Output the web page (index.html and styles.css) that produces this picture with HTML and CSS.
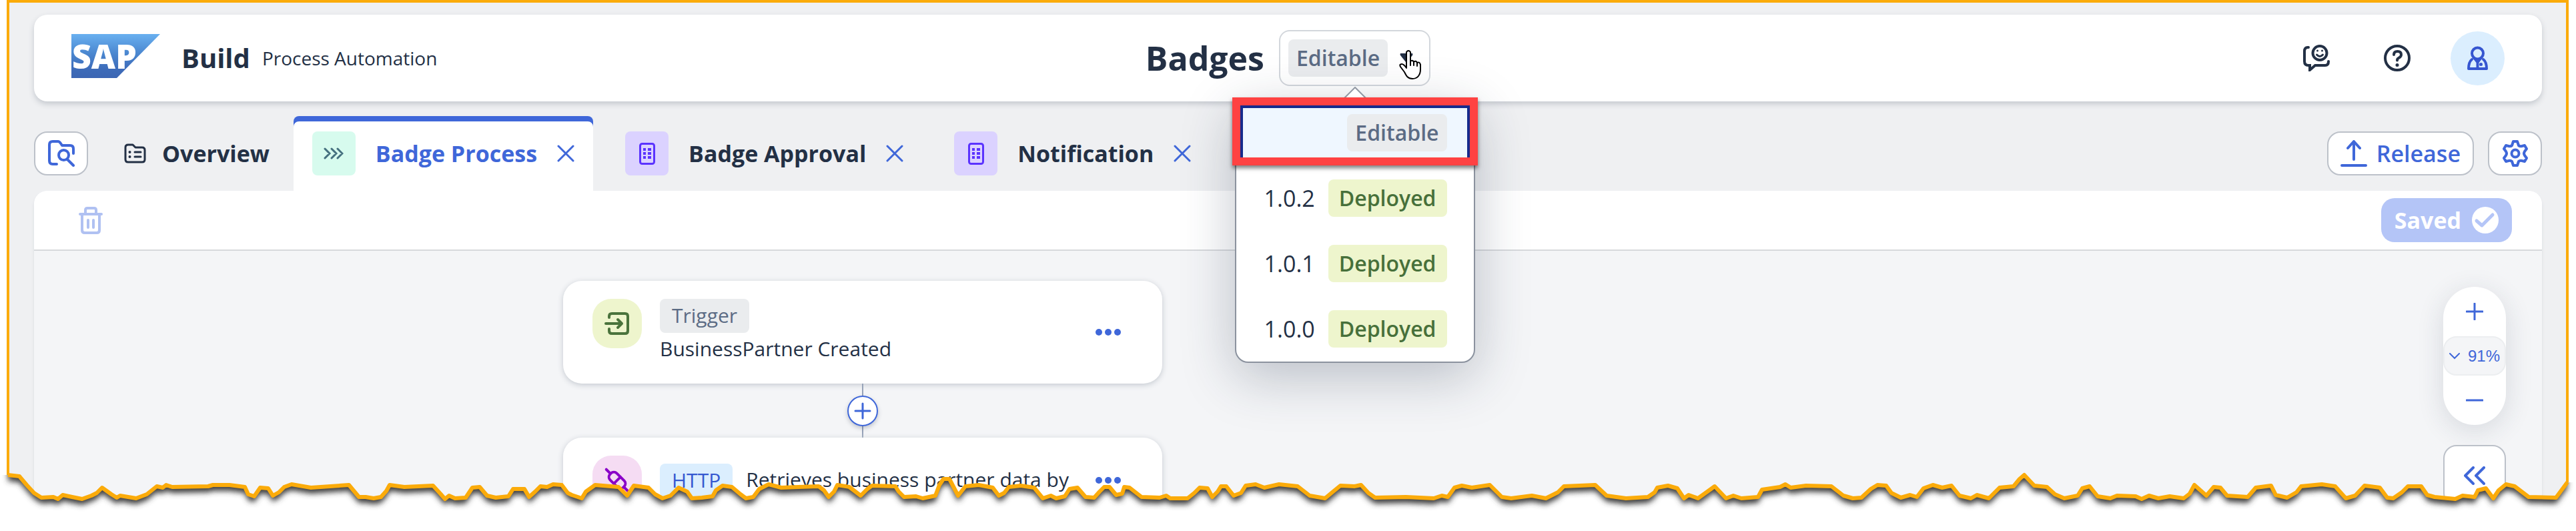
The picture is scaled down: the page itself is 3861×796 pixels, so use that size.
FILE: index.html
```html
<!DOCTYPE html>
<html lang="en">
<head>
<meta charset="utf-8">
<title>Badges - Build Process Automation</title>
<link rel="stylesheet" href="styles.css">
</head>
<body>
<div class="page">
  <div class="frame">
    <header class="shell">
      <div class="brand">
        <svg class="logo" viewBox="0 0 133 66" role="img" aria-label="SAP">
          <defs><linearGradient id="logo-fill" x1="0" y1="0" x2="0" y2="1"><stop offset="0" stop-color="#69b0f0"/><stop offset=".45" stop-color="#4a86cf"/><stop offset=".8" stop-color="#3d6bb9"/><stop offset="1" stop-color="#3c66b3"/></linearGradient></defs>
          <path d="M0 0H133L68 66H0Z" fill="url(#logo-fill)"/>
          <text class="logo-text" x="1" y="52">SAP</text>
        </svg>
        <span class="brand-name">Build</span>
        <span class="brand-sub">Process Automation</span>
      </div>
      <div class="title">
        <h1 class="title-text">Badges</h1>
        <div class="version">
          <button class="version-button" type="button" aria-haspopup="true" aria-expanded="true">
            <span class="tag tag-neutral tag-roomy">Editable</span>
            <svg class="caret" viewBox="0 0 20 14" aria-hidden="true"><path d="M1 0H19Q20 1 19 3L11 13Q10 14 9 13L1 3Q0 1 1 0Z" fill="#233045"/></svg>
          </button>
          <svg class="hand" viewBox="0 0 34 44" aria-hidden="true"><path d="M11 3Q14 -1 17 3V17Q20 14 22 18Q25 15 27 19Q31 17 32 22V29C32 37 28 43 20 43C13 43 11 39 8 33L2 25Q0 21 4 21Q7 21 11 27Z" fill="#fff" stroke="#000" stroke-width="2" stroke-linejoin="round"/><path d="M17 16V23M22 17V23M27 19V24" stroke="#000" stroke-width="2" stroke-linecap="round"/></svg>
          <div class="popover">
            <svg class="popover-arrow" viewBox="0 0 36 18" aria-hidden="true"><path d="M0 19L18 1L36 19" fill="#fff" stroke="#9299a4" stroke-width="2"/></svg>
            <ul class="versions">
              <li><button class="option option-focus" type="button"><span class="tag tag-neutral tag-roomy">Editable</span></button></li>
              <li><button class="option" type="button">1.0.2 <span class="tag tag-green tag-roomy">Deployed</span></button></li>
              <li><button class="option" type="button">1.0.1 <span class="tag tag-green tag-roomy">Deployed</span></button></li>
              <li><button class="option" type="button">1.0.0 <span class="tag tag-green tag-roomy">Deployed</span></button></li>
            </ul>
          </div>
        </div>
      </div>
      <div class="actions">
        <button class="round" type="button" aria-label="Feedback">
          <svg class="icon" viewBox="0 0 40 40"><g fill="none" stroke="#233045" stroke-width="4" stroke-linecap="round"><path d="M8 4H7Q2 4 2 10V25Q2 31 8 31H10V38L18 31H33Q38 31 38 25"/><circle cx="25" cy="12.500" r="10.500"/><path d="M20.500 15Q25 20 29.500 15" stroke-width="3"/></g><circle cx="21.500" cy="9" r="1.500" fill="#233045"/><circle cx="28.500" cy="9" r="1.500" fill="#233045"/></svg>
        </button>
        <button class="round" type="button" aria-label="Help">
          <svg class="icon" viewBox="0 0 40 40"><circle cx="20" cy="20" r="18" fill="none" stroke="#233045" stroke-width="4"/><path d="M15 15Q15 10 20.500 10Q26 10 26 15Q26 18 22 20Q20 21 20 23.500" fill="none" stroke="#233045" stroke-width="4" stroke-linecap="round"/><circle cx="20" cy="30.500" r="2.500" fill="#233045"/></svg>
        </button>
        <button class="round avatar" type="button" aria-label="Profile">
          <svg class="icon-avatar" viewBox="0 0 31 36"><circle cx="15.500" cy="11" r="8.500" fill="none" stroke="#3656d0" stroke-width="4"/><path d="M7 20Q2 24 2 34H29Q29 24 24 20" fill="none" stroke="#3656d0" stroke-width="4" stroke-linejoin="round" stroke-linecap="round"/><path d="M8 18Q15.500 22 23 18L17.500 25V34H13.500V25Z" fill="#3656d0"/><circle cx="20.500" cy="27.500" r="2.500" fill="#3656d0"/></svg>
        </button>
      </div>
    </header>

    <nav class="tabbar" aria-label="Artifacts">
      <button class="square" type="button" aria-label="Browse project">
        <svg class="icon" viewBox="0 0 40 40"><g fill="none" stroke="#3f67d9" stroke-width="4" stroke-linecap="round" stroke-linejoin="round"><path d="M13 36H7Q2 36 2 31V7Q2 2 7 2H15Q17 2 19 5L21 8H33Q38 8 38 13V20"/><circle cx="23.500" cy="22.500" r="7.500"/><path d="M29 29L38 38"/></g></svg>
      </button>
      <div class="tabs">
        <div class="tab tab-first">
          <svg class="icon-tab" viewBox="0 0 33 30"><path d="M2 6Q2 2 6 2H13L17 6H27Q31 6 31 10V24Q31 28 27 28H6Q2 28 2 24Z" fill="none" stroke="#233045" stroke-width="3" stroke-linejoin="round"/><path d="M16 13H25M16 20H25" stroke="#233045" stroke-width="3" stroke-linecap="round"/><circle cx="8.500" cy="13" r="2" fill="#233045"/><circle cx="8.500" cy="20" r="2" fill="#233045"/></svg>
          <button class="tab-label" type="button">Overview</button>
        </div>
        <div class="tab tab-active">
          <span class="chip chip-mint"><svg class="icon-chevrons" viewBox="0 0 30 18"><path d="M2 2L9 9L2 16M12 2L19 9L12 16M21 2L28 9L21 16" fill="none" stroke="#45707f" stroke-width="3" stroke-linecap="round"/></svg></span>
          <button class="tab-label" type="button" aria-current="page">Badge Process</button>
          <button class="close" type="button" aria-label="Close Badge Process"><svg class="icon-close" viewBox="0 0 26 26"><path d="M2 2L24 24M24 2L2 24" stroke="#3f67d9" stroke-width="3" stroke-linecap="round"/></svg></button>
        </div>
        <div class="tab">
          <span class="chip chip-violet"><svg class="icon-form" viewBox="0 0 24 33"><rect x="1.500" y="1.500" width="21" height="30" rx="3" fill="none" stroke="#5b33ff" stroke-width="3"/><path d="M6 10H10M13 10H18M6 16H10M13 16H18M6 22H10M13 22H18" stroke="#5b33ff" stroke-width="4"/></svg></span>
          <button class="tab-label" type="button">Badge Approval</button>
          <button class="close" type="button" aria-label="Close Badge Approval"><svg class="icon-close" viewBox="0 0 26 26"><path d="M2 2L24 24M24 2L2 24" stroke="#3f67d9" stroke-width="3" stroke-linecap="round"/></svg></button>
        </div>
        <div class="tab">
          <span class="chip chip-violet"><svg class="icon-form" viewBox="0 0 24 33"><rect x="1.500" y="1.500" width="21" height="30" rx="3" fill="none" stroke="#5b33ff" stroke-width="3"/><path d="M6 10H10M13 10H18M6 16H10M13 16H18M6 22H10M13 22H18" stroke="#5b33ff" stroke-width="4"/></svg></span>
          <button class="tab-label" type="button">Notification</button>
          <button class="close" type="button" aria-label="Close Notification"><svg class="icon-close" viewBox="0 0 26 26"><path d="M2 2L24 24M24 2L2 24" stroke="#3f67d9" stroke-width="3" stroke-linecap="round"/></svg></button>
        </div>
      </div>
      <div class="tab-actions">
        <button class="release" type="button">
          <svg class="icon" viewBox="0 0 40 40"><path d="M20 29V2M11 12L20 2L29 12M2 38H38" fill="none" stroke="#3f67d9" stroke-width="4" stroke-linecap="round" stroke-linejoin="round"/></svg>
          Release
        </button>
        <button class="square" type="button" aria-label="Settings">
          <svg class="icon" viewBox="0 0 40 40"><g fill="none" stroke="#3f67d9" stroke-width="4" stroke-linejoin="round"><path d="M17 2H23L25 8Q27 10 30 9L34 8L37 13L34 17Q32 20 34 23L37 27L34 32L30 31Q27 30 25 32L23 38H17L15 32Q13 30 10 31L6 32L3 27L6 23Q8 20 6 17L3 13L6 8L10 9Q13 10 15 8Z"/><circle cx="20" cy="20" r="5.500"/></g></svg>
        </button>
      </div>
    </nav>

    <main class="panel">
      <div class="toolbar">
        <button class="plain" type="button" aria-label="Delete" disabled>
          <svg class="icon-trash" viewBox="0 0 36 41"><g fill="none" stroke="#b0c1f2" stroke-width="4" stroke-linecap="round" stroke-linejoin="round"><path d="M2 11H34M10 10V5Q10 2 13 2H23Q26 2 26 5V10M5 12V35Q5 39 9 39H27Q31 39 31 35V12"/><path d="M14 20V31M22 20V31"/></g></svg>
        </button>
        <button class="saved" type="button" disabled>
          Saved
          <svg class="icon" viewBox="0 0 40 40"><circle cx="20" cy="20" r="20" fill="#fff"/><path d="M7 21L15 28L31 12" fill="none" stroke="#b4c5f7" stroke-width="5" stroke-linecap="round" stroke-linejoin="round"/></svg>
        </button>
      </div>
      <div class="canvas">
        <div class="flow">
          <article class="card">
            <span class="badge badge-green"><svg class="icon-step" viewBox="0 0 38 38"><g fill="none" stroke="#4a733c" stroke-width="4" stroke-linecap="round" stroke-linejoin="round"><path d="M7 10V8Q7 4 11 4H31Q35 4 35 8V30Q35 34 31 34H11Q7 34 7 30V27M2 19H26M20 13L26 19L20 25"/></g></svg></span>
            <div class="card-body">
              <span class="tag tag-neutral">Trigger</span>
              <span class="card-text">BusinessPartner Created</span>
            </div>
            <button class="plain" type="button" aria-label="More options"><svg class="dots" viewBox="0 0 38 10"><circle cx="5" cy="5" r="5" fill="#3f67d9"/><circle cx="19" cy="5" r="5" fill="#3f67d9"/><circle cx="33" cy="5" r="5" fill="#3f67d9"/></svg></button>
          </article>
          <div class="connector">
            <button class="add" type="button" aria-label="Add step"><svg class="icon-close" viewBox="0 0 26 26"><path d="M13 2V24M2 13H24" stroke="#3f67d9" stroke-width="3" stroke-linecap="round"/></svg></button>
          </div>
          <article class="card">
            <span class="badge badge-pink"><svg class="icon-step" viewBox="0 0 38 38"><g fill="none" stroke="#8a00c8" stroke-width="4" stroke-linecap="round" transform="rotate(45 19 19)"><path d="M-4 19H4M34 19H42"/><rect x="5" y="12" width="28" height="14" rx="6"/><path d="M19 12V26"/></g></svg></span>
            <div class="card-body card-row">
              <span class="tag tag-blue">HTTP</span>
              <span class="card-text">Retrieves business partner data by</span>
            </div>
            <button class="plain" type="button" aria-label="More options"><svg class="dots" viewBox="0 0 38 10"><circle cx="5" cy="5" r="5" fill="#3f67d9"/><circle cx="19" cy="5" r="5" fill="#3f67d9"/><circle cx="33" cy="5" r="5" fill="#3f67d9"/></svg></button>
          </article>
        </div>
        <div class="tools">
          <div class="zoom">
            <button class="zoom-step" type="button" aria-label="Zoom in"><svg class="icon-close" viewBox="0 0 26 26"><path d="M13 1V25M1 13H25" stroke="#3f67d9" stroke-width="3" stroke-linecap="round"/></svg></button>
            <button class="zoom-level" type="button"><svg class="icon-down" viewBox="0 0 16 10"><path d="M1 1L8 8L15 1" fill="none" stroke="#3f67d9" stroke-width="2" stroke-linecap="round"/></svg>91%</button>
            <button class="zoom-step" type="button" aria-label="Zoom out"><svg class="icon-close" viewBox="0 0 26 26"><path d="M1 13H25" stroke="#3f67d9" stroke-width="3" stroke-linecap="round"/></svg></button>
          </div>
          <button class="collapse" type="button" aria-label="Open panel"><svg class="icon-collapse" viewBox="0 0 32 28"><path d="M14 2L2 14L14 26M30 2L18 14L30 26" fill="none" stroke="#3f67d9" stroke-width="4" stroke-linecap="round" stroke-linejoin="round"/></svg></button>
        </div>
      </div>
    </main>
  </div>

  <svg class="tear" viewBox="0 696 3861 100" preserveAspectRatio="none" aria-hidden="true">
    <defs>
      <path id="edge" d="M12 712L29 714L40 727L51 739L62 746L80 745L87 748L94 742L108 745L123 748L137 743L145 739L153 731L167 741L175 746L180 743L204 747L220 741L235 729L244 731L249 727L258 730L312 729L319 727L344 727L367 730L372 741L381 744L390 731L402 732L409 743L418 738L426 730L437 726L466 731L523 727L538 745L548 745L560 747L571 745L579 736L584 727L606 730L649 728L660 740L667 748L673 743L682 747L698 746L708 731L719 730L730 743L743 746L762 744L769 733L786 733L793 745L802 737L810 729L820 730L829 726L842 727L851 739L857 742L872 747L878 737L892 727L927 730L940 743L950 728L972 731L982 741L993 747L1005 743L1017 731L1030 737L1037 747L1052 746L1068 744L1073 735L1083 728L1097 730L1110 741L1118 747L1129 745L1138 733L1152 726L1171 731L1197 730L1227 729L1235 735L1242 745L1250 737L1255 727L1273 730L1290 743L1300 733L1307 728L1342 729L1347 737L1355 745L1373 744L1383 747L1402 743L1408 727L1414 718L1423 718L1436 743L1447 729L1467 727L1488 731L1497 743L1505 739L1512 730L1530 728L1550 731L1563 747L1575 743L1583 747L1596 744L1603 733L1615 731L1627 745L1640 746L1648 737L1655 730L1663 730L1673 742L1682 740L1685 730L1693 731L1711 745L1738 746L1748 743L1754 747L1780 747L1790 739L1798 731L1810 732L1817 745L1825 737L1830 729L1838 729L1849 743L1860 739L1867 728L1882 726L1895 731L1917 726L1945 729L1963 743L1986 747L1998 737L2009 728L2030 729L2040 727L2051 739L2061 746L2107 745L2149 747L2161 743L2170 745L2180 731L2191 728L2206 731L2233 727L2251 745L2265 747L2296 743L2317 747L2335 738L2344 729L2391 727L2408 743L2437 747L2470 745L2480 738L2484 731L2500 728L2514 732L2524 747L2531 742L2545 747L2559 737L2570 729L2587 747L2598 743L2610 747L2635 745L2641 734L2668 730L2676 726L2684 731L2707 728L2745 729L2763 743L2777 747L2790 746L2804 733L2814 727L2827 728L2835 739L2849 746L2863 742L2873 745L2883 732L2897 727L2911 731L2925 728L2937 743L2954 747L2963 742L2981 747L2997 731L3018 729L3027 718L3034 712L3049 728L3068 730L3080 741L3094 747L3114 743L3121 732L3132 729L3144 744L3163 747L3173 743L3201 744L3210 748L3221 743L3235 747L3252 744L3273 747L3282 740L3289 727L3307 743L3318 730L3328 731L3338 743L3369 745L3381 731L3404 728L3411 742L3428 746L3442 738L3449 729L3480 726L3500 729L3516 747L3530 743L3544 728L3567 731L3578 746L3587 747L3600 738L3609 729L3629 729L3638 742L3649 745L3680 748L3691 743L3709 745L3714 735L3726 732L3737 747L3745 735L3756 726L3769 729L3790 745L3831 746L3848 723"/>
      <filter id="soft" x="-1%" y="-50%" width="102%" height="200%"><feGaussianBlur stdDeviation="4"/></filter>
    </defs>
    <g class="tear-paper"></g>
    <use class="tear-line" href="#edge"/>
  </svg>
</div>
<script src="tear.js"></script>
</body>
</html>
```
FILE: tear.js
```js
// Builds the paper below the torn edge, and the shadow that falls on it.
(function () {
  var ns = "http://www.w3.org/2000/svg";
  var line = document.getElementById("edge").getAttribute("d");
  var points = line.slice(1);

  function path(d, className) {
    var el = document.createElementNS(ns, "path");
    el.setAttribute("d", d);
    el.setAttribute("class", className);
    return el;
  }

  var paper = "M0 712L" + points + "L3861 723V800H0Z";
  var defs = document.querySelector(".tear defs");
  var clip = document.createElementNS(ns, "clipPath");
  clip.setAttribute("id", "paper-clip");
  clip.appendChild(path(paper, ""));
  defs.appendChild(clip);

  var group = document.querySelector(".tear-paper");
  group.setAttribute("clip-path", "url(#paper-clip)");
  group.appendChild(path(paper, "tear-fill"));
  var shade = path(line + "V690H12Z", "tear-shade");
  shade.setAttribute("filter", "url(#soft)");
  shade.setAttribute("transform", "translate(0 9)");
  group.appendChild(shade);
})();
```
FILE: styles.css
```css
* { box-sizing: border-box; }

body {
  margin: 0;
  background: #fff;
  color: #233045;
  font-family: "Open Sans", "Noto Sans", sans-serif;
  font-size: 32px;
  line-height: 44px;
}

button {
  margin: 0;
  padding: 0;
  border: 0;
  background: none;
  color: inherit;
  font: inherit;
}

svg { display: block; flex: none; }

.page {
  position: relative;
  height: 100vh;
  padding: 0 11px 0 10px;
  overflow: hidden;
}

.frame {
  display: flex;
  flex-direction: column;
  height: 100%;
  padding: 18px 36px 0 37px;
  border: 4px solid #fbab0a;
  border-bottom: 0;
  background: #eff0f2;
}

/* Shell bar */
.shell {
  position: relative;
  z-index: 2;
  display: grid;
  grid-template-columns: 1fr auto 1fr;
  align-items: center;
  height: 130px;
  flex: none;
  padding: 0 56px;
  border-radius: 20px;
  background: #fff;
  box-shadow: 0 4px 8px #c5c9cf;
}

.brand { display: flex; align-items: center; gap: 18px; }
.logo { width: 133px; height: 66px; margin: 0 14px 6px 0; overflow: visible; }
.logo-text { fill: #fff; font-size: 50px; font-weight: 800; }
.brand-name { font-size: 40px; font-weight: 700; }
.brand-sub { font-size: 28px; }

.title { display: flex; align-items: center; gap: 22px; }
.title-text { margin: 0; font-size: 50px; font-weight: 700; line-height: 64px; }

.version { position: relative; }
.version-button {
  display: flex;
  align-items: center;
  gap: 18px;
  height: 84px;
  padding: 0 24px 0 12px;
  border: 2px solid #d3d7dc;
  border-radius: 16px;
  background: #fff;
}
.caret { width: 20px; height: 14px; }
.hand { position: absolute; z-index: 2; right: 13px; top: 30px; width: 34px; height: 44px; }

.tag {
  display: inline-block;
  padding: 3px 18px 4px;
  border-radius: 8px;
}
.tag-roomy { padding: 6px 12px; font-size: 32px; font-weight: 600; }
.tag-neutral { background: #eaecee; color: #5b6b84; }
.tag-green { padding: 6px 16px; background: #eef5cd; color: #47703a; }
.tag-blue { background: #dbeefe; color: #3558d0; }

.popover {
  position: absolute;
  z-index: 1;
  top: 103px;
  left: 50%;
  width: 360px;
  transform: translateX(-50%);
  border: 2px solid #8b929e;
  border-radius: 20px;
  background: #fff;
  box-shadow: 0 20px 80px rgba(34, 48, 73, .28);
}
.popover-arrow { position: absolute; top: -20px; left: 50%; width: 36px; height: 18px; margin-left: -18px; }
.versions { margin: 0; padding: 0; list-style: none; }
.option {
  position: relative;
  display: flex;
  align-items: center;
  justify-content: flex-end;
  gap: 20px;
  width: 100%;
  height: 98px;
  padding: 0 40px;
  font-size: 34px;
}
.option-focus { background: #eff7ff; }
.option-focus::after {
  content: "";
  position: absolute;
  inset: -4px -6px 0;
  border: 12px solid #ff4242;
  box-shadow: inset 4px 4px 0 #162a8c, inset -4px 4px 0 #162a8c, 0 4px 6px rgba(0, 0, 0, .5);
}

.actions { display: flex; justify-content: flex-end; gap: 40px; }
.round { display: grid; place-items: center; width: 81px; height: 81px; border-radius: 50%; }
.avatar { background: #dbeefe; }
.icon { width: 40px; height: 40px; }
.icon-avatar { width: 31px; height: 36px; }

/* Tabs */
.tabbar { display: flex; align-items: center; flex: none; height: 112px; margin-top: 22px; }
.square,
.release {
  display: flex;
  align-items: center;
  justify-content: center;
  height: 66px;
  min-width: 81px;
  border: 2px solid #bcc1c9;
  border-radius: 20px;
  background: #fff;
  color: #3f67d9;
}
.release { gap: 14px; padding: 0 18px; font-size: 34px; font-weight: 600; }
.tabs { display: flex; align-self: stretch; flex: 1; }
.tab { display: flex; align-items: center; gap: 30px; padding: 0 28px 0 48px; }
.tab-first { gap: 24px; padding: 0 36px 0 54px; }
.tab-active {
  padding-left: 28px;
  border-radius: 8px 8px 0 0;
  background: #fff;
  box-shadow: inset 0 8px 0 #3f67d9;
  color: #3f67d9;
}
.tab-label { font-size: 34px; font-weight: 700; white-space: nowrap; }
.icon-tab { width: 33px; height: 30px; }
.chip { display: grid; place-items: center; width: 65px; height: 66px; border-radius: 8px; }
.chip-mint { background: #d7fbee; }
.chip-violet { background: #dbd2ff; }
.icon-chevrons { width: 30px; height: 18px; }
.icon-form { width: 24px; height: 33px; }
.icon-close { width: 26px; height: 26px; }
.tab-actions { display: flex; gap: 21px; }

/* Editor */
.panel {
  display: flex;
  flex-direction: column;
  flex: 1;
  min-height: 0;
  border-radius: 20px 20px 0 0;
  background: #f4f5f7;
  box-shadow: 0 4px 4px #d9dce0;
}
.toolbar {
  display: flex;
  align-items: center;
  justify-content: space-between;
  flex: none;
  height: 90px;
  padding: 0 45px 0 67px;
  border-bottom: 2px solid #d7d9dc;
  border-radius: 20px 20px 0 0;
  background: #fff;
}
.icon-trash { width: 36px; height: 41px; }
.saved {
  display: flex;
  align-items: center;
  gap: 16px;
  height: 66px;
  padding: 0 20px;
  border-radius: 20px;
  background: #b4c5f7;
  color: #fff;
  font-size: 34px;
  font-weight: 700;
}

.canvas { position: relative; flex: 1; min-height: 0; padding: 45px 0 0 793px; }
.flow { width: 898px; font-size: 30px; }
.card {
  display: flex;
  gap: 27px;
  padding: 27px 62px 27px 44px;
  border-radius: 28px;
  background: #fff;
  box-shadow: 0 2px 8px #c3c8cf;
}
.card .plain { align-self: center; }
.badge { display: grid; place-items: center; flex: none; width: 74px; height: 74px; border-radius: 28px; }
.badge-green { background: #eef5cd; }
.badge-pink { background: #f5dcf3; }
.icon-step { width: 38px; height: 38px; overflow: visible; }
.card-body { display: flex; flex: 1; flex-direction: column; align-items: flex-start; gap: 2px; }
.card-row { flex-direction: row; align-items: center; gap: 20px; }
.card-text { padding-bottom: 3px; white-space: nowrap; }
.dots { width: 38px; height: 10px; }

.connector {
  display: grid;
  place-items: center;
  height: 81px;
  background: linear-gradient(#97a3b8, #97a3b8) center / 2px 100% no-repeat;
}
.add {
  display: grid;
  place-items: center;
  width: 46px;
  height: 46px;
  border: 2px solid #3f67d9;
  border-radius: 50%;
  background: #fff;
  box-shadow: 0 3px 6px rgba(34, 48, 73, .25);
}

.tools { position: absolute; top: 54px; right: 54px; display: grid; gap: 30px; width: 94px; }
.zoom { border-radius: 48px; background: #fff; box-shadow: 0 8px 40px rgba(34, 48, 73, .14); }
.zoom-step { display: grid; place-items: center; width: 100%; height: 74px; }
.zoom-level {
  display: flex;
  align-items: center;
  justify-content: center;
  gap: 12px;
  width: 100%;
  height: 59px;
  border: 2px solid #eceef0;
  border-radius: 20px;
  background: #f4f5f7;
  color: #3f67d9;
  font-family: "Liberation Sans", Arial, sans-serif;
  font-size: 24px;
}
.icon-down { width: 16px; height: 10px; }
.collapse {
  display: grid;
  place-items: center;
  height: 92px;
  border: 2px solid #bcc1c9;
  border-radius: 20px;
  background: #fff;
}
.icon-collapse { width: 32px; height: 28px; }

/* Torn bottom edge */
.tear { position: absolute; z-index: 3; left: 0; bottom: 0; width: 100%; height: 100px; }
.tear-fill { fill: #fff; }
.tear-shade { fill: #3c3c3c; }
.tear-line { fill: none; stroke: #fbab0a; stroke-width: 6px; stroke-linejoin: round; }
```
